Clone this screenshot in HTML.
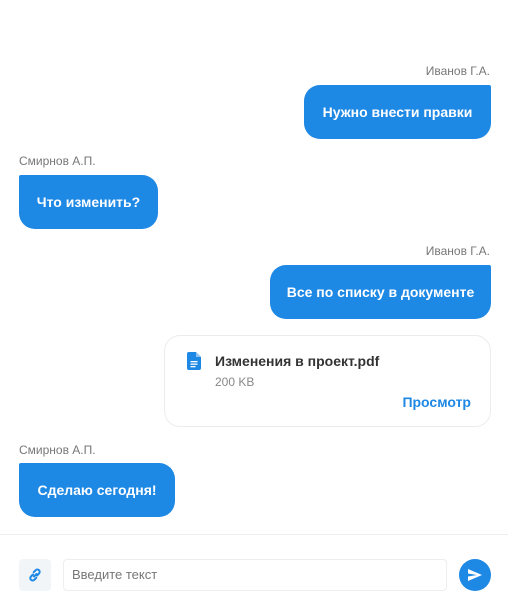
<!DOCTYPE html>
<html><head><meta charset="utf-8"><style>
*{margin:0;padding:0;box-sizing:border-box}
body{width:508px;height:608px;background:#fff;font-family:"Liberation Sans","DejaVu Sans",sans-serif;position:relative;overflow:hidden}
.l{position:absolute;font-size:12px;color:#777;line-height:12px}
.b{position:absolute;height:54px;background:#1e88e5;color:#fff;font-size:14px;font-weight:bold;line-height:54px;text-align:center;border-radius:16px}
.r{border-top-right-radius:2px}
.lf{border-top-left-radius:2px}
</style></head><body>
<div class="l" style="right:18px;top:65px">Иванов Г.А.</div>
<div class="b r" style="left:304px;top:85px;width:187px">Нужно внести правки</div>
<div class="l" style="left:19px;top:155px">Смирнов А.П.</div>
<div class="b lf" style="left:19px;top:175px;width:139px">Что изменить?</div>
<div class="l" style="right:18px;top:245px">Иванов Г.А.</div>
<div class="b r" style="left:270px;top:265px;width:221px">Все по списку в документе</div>
<div style="position:absolute;left:164px;top:335px;width:327px;height:92px;border:1px solid #ececec;border-radius:16px">
<svg style="position:absolute;left:22px;top:16px" width="14" height="18" viewBox="0 0 14 18"><path d="M2 0h7l5 5v11a2 2 0 0 1-2 2H2a2 2 0 0 1-2-2V2a2 2 0 0 1 2-2z" fill="#1e88e5"/><path d="M9 0v5h5z" fill="#90c2f2"/><rect x="3.5" y="9" width="7" height="1.3" fill="#fff"/><rect x="3.5" y="11.5" width="7" height="1.3" fill="#fff"/><rect x="3.5" y="14" width="5" height="1.3" fill="#fff"/></svg>
<div style="position:absolute;left:50px;top:17px;font-size:14px;font-weight:bold;color:#333">Изменения в проект.pdf</div>
<div style="position:absolute;left:50px;top:39px;font-size:12px;color:#888">200 KB</div>
<div style="position:absolute;right:19px;top:58px;font-size:14px;font-weight:bold;color:#1e88e5">Просмотр</div>
</div>
<div class="l" style="left:19px;top:444px">Смирнов А.П.</div>
<div class="b lf" style="left:19px;top:463px;width:156px">Сделаю сегодня!</div>
<div style="position:absolute;left:0;top:534px;width:508px;height:1px;background:#eee"></div>
<div style="position:absolute;left:19px;top:559px;width:32px;height:32px;background:#f2f5f8;border-radius:4px">
<svg style="position:absolute;left:8px;top:8px" width="16" height="16" viewBox="0 0 16 16" fill="none" stroke="#1e88e5" stroke-width="2" stroke-linecap="round"><path d="M7 9.5l2.5-2.5"/><path d="M6 7.5L4 9.5a2.3 2.3 0 0 0 3.3 3.3l2-2"/><path d="M10 8.5l2-2A2.3 2.3 0 0 0 8.7 3.2l-2 2"/></svg></div>
<div style="position:absolute;left:63px;top:559px;width:384px;height:32px;border:1px solid #eee;border-radius:4px;font-size:13px;color:#777;line-height:30px;padding-left:8px">Введите текст</div>
<div style="position:absolute;left:459px;top:559px;width:32px;height:32px;border-radius:50%;background:#1e88e5">
<svg style="position:absolute;left:9px;top:10px" width="14" height="12" viewBox="0 0 14 12"><path d="M0 0L14 6L0 12L0 7.5L9 6L0 4.5Z" fill="#fff"/></svg></div>
</body></html>
